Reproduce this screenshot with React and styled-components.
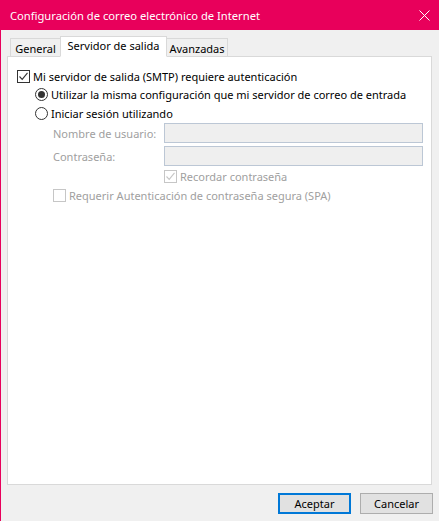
import React from "react";
import styled, { createGlobalStyle } from "styled-components";

const Global = createGlobalStyle`
  html, body { margin: 0; padding: 0; background: #f0f0f0; }
  body { font-family: "Noto Sans", "Segoe UI", sans-serif; font-size: 11px; color: #000; }
`;

const Window = styled.div`
  width: 439px;
  height: 521px;
  box-sizing: border-box;
  border-left: 1px solid #e8005b;
  background: #f0f0f0;
  display: flex;
  flex-direction: column;
  overflow: hidden;
`;

const TitleBar = styled.div`
  height: 30px;
  flex: none;
  background: #e8005b;
  color: #fff;
  display: flex;
  align-items: center;
  justify-content: space-between;
  padding: 0 8px 0 9px;
  font-size: 11.2px;
`;

const Close = styled.svg`
  width: 11px;
  height: 11px;
  margin-right: 1px;
`;

const Body = styled.div`
  flex: 1;
  display: flex;
  flex-direction: column;
  padding: 7px 7px 0 6px;
`;

const TabStrip = styled.div`
  display: flex;
  align-items: flex-end;
  padding-left: 3px;
  height: 20px;
  position: relative;
  z-index: 1;
  margin-bottom: -1px;
`;

const Tab = styled.div`
  box-sizing: border-box;
  width: ${(p) => p.$w}px;
  height: ${(p) => (p.$active ? "21px" : "19px")};
  border: 1px solid #d9d9d9;
  border-bottom: ${(p) => (p.$active ? "1px solid #fff" : "1px solid #d9d9d9")};
  background: ${(p) => (p.$active ? "#fff" : "#f0f0f0")};
  padding: ${(p) => (p.$active ? "0 0 3px 0" : "1px 0 0 0")};
  margin-left: ${(p) => (p.$first ? "0" : "-1px")};
  display: flex;
  align-items: center;
  justify-content: center;
  white-space: nowrap;
  z-index: ${(p) => (p.$active ? 2 : 1)};
`;

const Panel = styled.div`
  flex: none;
  height: 429px;
  box-sizing: border-box;
  border: 1px solid #d9d9d9;
  background: #fff;
  padding: 10px 9px 0 9px;
  display: flex;
  flex-direction: column;
`;

const Row = styled.label`
  display: flex;
  align-items: center;
  height: 18px;
  margin-left: ${(p) => p.$indent || 0}px;
  margin-top: ${(p) => p.$top || 0}px;
  color: ${(p) => (p.$disabled ? "#a0a0a0" : "#000")};
  white-space: nowrap;
  gap: 3px;
`;

const Box = styled.span`
  width: 13px;
  height: 13px;
  box-sizing: border-box;
  border: 1px solid ${(p) => (p.$disabled ? "#c6c6c6" : "#333")};
  background: #fff;
  display: inline-flex;
  align-items: center;
  justify-content: center;
  flex: none;
`;

const Radio = styled.span`
  width: 13px;
  height: 13px;
  box-sizing: border-box;
  border: 1px solid #333;
  border-radius: 50%;
  background: #fff;
  display: inline-flex;
  align-items: center;
  justify-content: center;
  flex: none;
  &::after {
    content: "";
    display: ${(p) => (p.$on ? "block" : "none")};
    width: 7px;
    height: 7px;
    border-radius: 50%;
    background: #333;
  }
`;

const FieldGrid = styled.div`
  display: grid;
  grid-template-columns: 111px 259px;
  row-gap: 3px;
  margin-left: 36px;
  margin-top: 1px;
  align-items: center;
`;

const FieldLabel = styled.span`
  color: #a0a0a0;
  white-space: nowrap;
`;

const Input = styled.div`
  height: 20px;
  box-sizing: border-box;
  border: 1px solid #bcc7d5;
  background: #efefef;
`;

const Footer = styled.div`
  flex: 1;
  display: flex;
  justify-content: flex-end;
  align-items: flex-start;
  gap: 9px;
  padding: 8px 0 0 0;
  margin-right: -1px;
`;

const Button = styled.button`
  width: 73px;
  height: 21px;
  box-sizing: border-box;
  font: inherit;
  font-size: 11px;
  color: #000;
  background: #e1e1e1;
  border: ${(p) => (p.$default ? "2px solid #0078d7" : "1px solid #adadad")};
  padding: 0;
  display: flex;
  align-items: center;
  justify-content: center;
`;

const Check = ({ color }) => (
  <svg width="11" height="11" viewBox="0 0 11 11">
    <path d="M1.5 5.5 L4.2 8.3 L9.5 1.8" fill="none" stroke={color} strokeWidth="1.1" />
  </svg>
);

export default function App() {
  return (
    <>
      <Global />
      <Window>
        <TitleBar>
          <span>Configuración de correo electrónico de Internet</span>
          <Close viewBox="0 0 11 11">
            <path d="M0.5 0.5 L10.5 10.5 M10.5 0.5 L0.5 10.5" stroke="#fff" strokeWidth="1" />
          </Close>
        </TitleBar>
        <Body>
          <TabStrip>
            <Tab $first $w={51}>General</Tab>
            <Tab $active $w={107}>Servidor de salida</Tab>
            <Tab $w={62}>Avanzadas</Tab>
          </TabStrip>
          <Panel>
            <Row>
              <Box>
                <Check color="#333" />
              </Box>
              Mi servidor de salida (SMTP) requiere autenticación
            </Row>
            <Row $indent={18}>
              <Radio $on />
              Utilizar la misma configuración que mi servidor de correo de entrada
            </Row>
            <Row $indent={18} $top={1}>
              <Radio />
              Iniciar sesión utilizando
            </Row>
            <FieldGrid>
              <FieldLabel>Nombre de usuario:</FieldLabel>
              <Input />
              <FieldLabel>Contraseña:</FieldLabel>
              <Input />
            </FieldGrid>
            <Row $indent={147} $disabled $top={1}>
              <Box $disabled>
                <Check color="#c6c6c6" />
              </Box>
              Recordar contraseña
            </Row>
            <Row $indent={36} $disabled $top={1}>
              <Box $disabled />
              Requerir Autenticación de contraseña segura (SPA)
            </Row>
          </Panel>
          <Footer>
            <Button $default>Aceptar</Button>
            <Button>Cancelar</Button>
          </Footer>
        </Body>
      </Window>
    </>
  );
}
